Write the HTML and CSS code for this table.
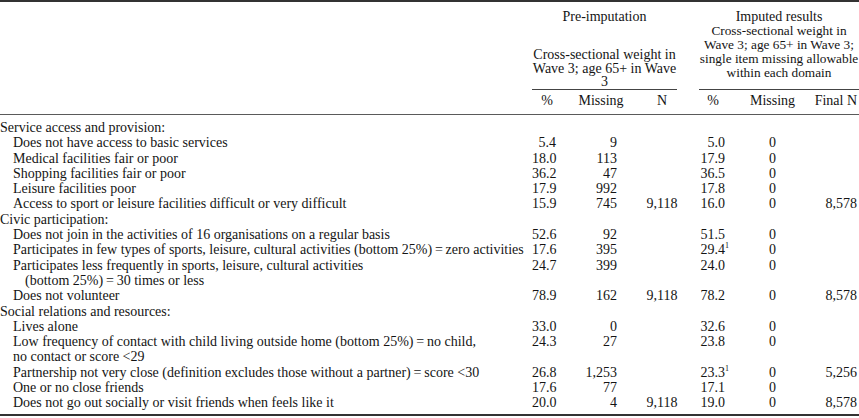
FILE: index.html
```html
<!DOCTYPE html>
<html lang="en">
<head>
<meta charset="utf-8">
<title>Pre-imputation and imputed results</title>
<link rel="stylesheet" href="styles.css">
</head>
<body>
<table class="results">
  <colgroup>
    <col class="c-label">
    <col class="c-pct">
    <col class="c-miss">
    <col class="c-n">
    <col class="c-ipct">
    <col class="c-imiss">
    <col class="c-fn">
  </colgroup>
  <thead>
    <tr class="groups">
      <th class="blank"></th>
      <th colspan="3" class="grp-cell">
        <div class="grp grp-pre">
          <div class="grp-title">Pre-imputation</div>
          <div class="grp-sub">Cross-sectional weight in<br>Wave 3; age 65+ in Wave<br>3</div>
        </div>
      </th>
      <th colspan="3" class="grp-cell">
        <div class="grp grp-imp">
          <div class="grp-title">Imputed results</div>
          <div class="grp-imp-sub">Cross-sectional weight in<br>Wave 3; age 65+ in Wave 3;<br>single item missing allowable<br>within each domain</div>
        </div>
      </th>
    </tr>
    <tr class="cols">
      <th class="blank"></th>
      <th class="h-pct">%</th>
      <th class="h-miss">Missing</th>
      <th class="h-n">N</th>
      <th class="h-ipct">%</th>
      <th class="h-imiss">Missing</th>
      <th class="h-fn">Final N</th>
    </tr>
  </thead>
  <tbody>
    <tr class="first"><td class="cat" colspan="7">Service access and provision:</td></tr>
    <tr><td class="item">Does not have access to basic services</td><td class="v-pct">5.4</td><td class="v-miss">9</td><td class="v-n"></td><td class="v-ipct">5.0</td><td class="v-imiss">0</td><td class="v-fn"></td></tr>
    <tr><td class="item">Medical facilities fair or poor</td><td class="v-pct">18.0</td><td class="v-miss">113</td><td class="v-n"></td><td class="v-ipct">17.9</td><td class="v-imiss">0</td><td class="v-fn"></td></tr>
    <tr><td class="item">Shopping facilities fair or poor</td><td class="v-pct">36.2</td><td class="v-miss">47</td><td class="v-n"></td><td class="v-ipct">36.5</td><td class="v-imiss">0</td><td class="v-fn"></td></tr>
    <tr><td class="item">Leisure facilities poor</td><td class="v-pct">17.9</td><td class="v-miss">992</td><td class="v-n"></td><td class="v-ipct">17.8</td><td class="v-imiss">0</td><td class="v-fn"></td></tr>
    <tr><td class="item">Access to sport or leisure facilities difficult or very difficult</td><td class="v-pct">15.9</td><td class="v-miss">745</td><td class="v-n">9,118</td><td class="v-ipct">16.0</td><td class="v-imiss">0</td><td class="v-fn">8,578</td></tr>
    <tr><td class="cat" colspan="7">Civic participation:</td></tr>
    <tr><td class="item">Does not join in the activities of 16 organisations on a regular basis</td><td class="v-pct">52.6</td><td class="v-miss">92</td><td class="v-n"></td><td class="v-ipct">51.5</td><td class="v-imiss">0</td><td class="v-fn"></td></tr>
    <tr><td class="item">Participates in few types of sports, leisure, cultural activities (bottom 25%)&#8201;=&#8201;zero activities</td><td class="v-pct">17.6</td><td class="v-miss">395</td><td class="v-n"></td><td class="v-ipct">29.4<sup class="note">1</sup></td><td class="v-imiss">0</td><td class="v-fn"></td></tr>
    <tr><td class="item">Participates less frequently in sports, leisure, cultural activities<br><span class="cont">(bottom 25%)&#8201;=&#8201;30 times or less</span></td><td class="v-pct">24.7</td><td class="v-miss">399</td><td class="v-n"></td><td class="v-ipct">24.0</td><td class="v-imiss">0</td><td class="v-fn"></td></tr>
    <tr><td class="item">Does not volunteer</td><td class="v-pct">78.9</td><td class="v-miss">162</td><td class="v-n">9,118</td><td class="v-ipct">78.2</td><td class="v-imiss">0</td><td class="v-fn">8,578</td></tr>
    <tr><td class="cat" colspan="7">Social relations and resources:</td></tr>
    <tr><td class="item">Lives alone</td><td class="v-pct">33.0</td><td class="v-miss">0</td><td class="v-n"></td><td class="v-ipct">32.6</td><td class="v-imiss">0</td><td class="v-fn"></td></tr>
    <tr><td class="item">Low frequency of contact with child living outside home (bottom 25%)&#8201;=&#8201;no child,<br>no contact or score &lt;29</td><td class="v-pct">24.3</td><td class="v-miss">27</td><td class="v-n"></td><td class="v-ipct">23.8</td><td class="v-imiss">0</td><td class="v-fn"></td></tr>
    <tr><td class="item">Partnership not very close (definition excludes those without a partner)&#8201;=&#8201;score &lt;30</td><td class="v-pct">26.8</td><td class="v-miss">1,253</td><td class="v-n"></td><td class="v-ipct">23.3<sup class="note">1</sup></td><td class="v-imiss">0</td><td class="v-fn">5,256</td></tr>
    <tr><td class="item">One or no close friends</td><td class="v-pct">17.6</td><td class="v-miss">77</td><td class="v-n"></td><td class="v-ipct">17.1</td><td class="v-imiss">0</td><td class="v-fn"></td></tr>
    <tr class="last"><td class="item">Does not go out socially or visit friends when feels like it</td><td class="v-pct">20.0</td><td class="v-miss">4</td><td class="v-n">9,118</td><td class="v-ipct">19.0</td><td class="v-imiss">0</td><td class="v-fn">8,578</td></tr>
  </tbody>
</table>
</body>
</html>
```

FILE: styles.css
```css
html, body {
  margin: 0;
  padding: 0;
  background: #ffffff;
}

body {
  font-family: "Liberation Serif", "Times New Roman", serif;
  font-size: 14px;
  color: #141414;
  font-variant-numeric: oldstyle-nums;
}

.results {
  width: 859px;
  table-layout: fixed;
  border-collapse: collapse;
  border-top: 2px solid #333333;
  border-bottom: 2px solid #333333;
}

.c-label { width: 532px; }
.c-pct { width: 30px; }
.c-miss { width: 78px; }
.c-n { width: 44px; }
.c-ipct { width: 51px; }
.c-imiss { width: 75px; }
.c-fn { width: 49px; }

th {
  font-weight: normal;
  padding: 0;
}

.groups th {
  padding-top: 8px;
  vertical-align: top;
  line-height: 14px;
  text-align: center;
  white-space: nowrap;
}

.grp {
  height: 80px;
  box-sizing: border-box;
  border-bottom: 1px solid #444444;
}

.grp-pre {
  margin-right: 7px;
}

.grp-imp {
  margin-left: 15px;
}

.grp-sub {
  margin-top: 24px;
  line-height: 13.5px;
}

.grp-imp-sub {
  font-size: 13.3px;
  line-height: 14px;
}

.cols th {
  line-height: 14px;
  padding-top: 4px;
  padding-bottom: 6px;
  border-bottom: 1px solid #5a5a5a;
  white-space: nowrap;
}

.h-pct, .h-miss, .h-n, .h-imiss { text-align: center; }
.h-ipct { text-align: center; padding-left: 7px; }
.h-fn { text-align: right; padding-right: 2px; }

td {
  padding: 0;
  line-height: 15.3px;
  vertical-align: top;
  white-space: nowrap;
}

tr.first td { padding-top: 5px; }
tr.last td { padding-bottom: 3px; }

.cat { text-align: left; }
.item { padding-left: 13px; }
.cont { padding-left: 12px; }

.v-pct { text-align: right; padding-right: 6px; }
.v-miss { text-align: right; padding-right: 23px; }
.v-n { text-align: center; }
.v-ipct { text-align: right; padding-right: 10px; }
.v-imiss { text-align: center; }
.v-fn { text-align: right; padding-right: 2px; }

.note {
  font-size: 8px;
  line-height: 0;
  vertical-align: 6px;
  margin-right: -4px;
}
```
